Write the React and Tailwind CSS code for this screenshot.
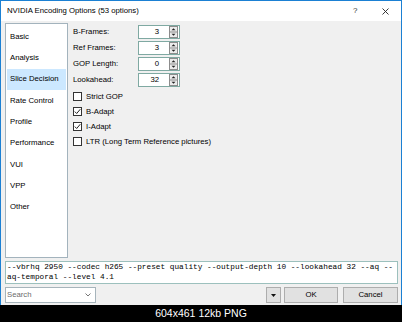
export default function App() {
  const items = ["Basic", "Analysis", "Slice Decision", "Rate Control", "Profile", "Performance", "VUI", "VPP", "Other"];
  const spins = [
    ["B-Frames:", "3"],
    ["Ref Frames:", "3"],
    ["GOP Length:", "0"],
    ["Lookahead:", "32"],
  ];
  const checks = [
    ["Strict GOP", false],
    ["B-Adapt", true],
    ["I-Adapt", true],
    ["LTR (Long Term Reference pictures)", false],
  ];
  return (
    <div className="w-[402px] h-[322px] bg-black flex flex-col font-['Liberation_Sans',Arial,sans-serif] text-[7.75px] text-black overflow-hidden">
      <div className="h-[305px] shrink-0 flex flex-col bg-[#f0f0f0] border-x border-t border-[#1b80d3]">
        {/* title bar */}
        <div className="h-[20px] shrink-0 bg-white flex items-center pl-[6px]">
          <span className="flex-1 text-black">NVIDIA Encoding Options (53 options)</span>
          <span className="w-[10px] text-[#333] text-[8px] mr-[19px]">?</span>
          <svg width="7" height="7" viewBox="0 0 7 7" className="mr-[12px]">
            <path d="M0.5 0.5 L6.5 6.5 M6.5 0.5 L0.5 6.5" stroke="#222" strokeWidth="0.9" />
          </svg>
        </div>
        {/* body */}
        <div className="flex-1 flex flex-col pl-[4px] pr-[3px] pt-[2px]">
          <div className="flex h-[235px] shrink-0">
            {/* nav list */}
            <div className="w-[63px] h-full bg-white border border-[#a3b3bd] pt-[2px] px-[1px]">
              {items.map((it) => (
                <div
                  key={it}
                  className={
                    "h-[21.3px] flex items-center pl-[3px] whitespace-nowrap " +
                    (it === "Slice Decision" ? "bg-[#cce8ff]" : "")
                  }
                >
                  {it}
                </div>
              ))}
            </div>
            {/* right panel */}
            <div className="flex-1 pl-[5px] pt-[2px] flex flex-col">
              <div className="flex flex-col gap-[2px]">
                {spins.map(([l, v]) => (
                  <div key={l} className="flex items-center h-[14px]">
                    <span className="w-[65px] whitespace-nowrap">{l}</span>
                    <div className="w-[42px] h-[14px] bg-white border border-[#7fa9a2] flex items-center">
                      <span className="flex-1 text-right pr-[10px]">{v}</span>
                      <svg width="9" height="12" viewBox="0 0 9 12" className="mr-[1px]">
                        <rect x="0.5" y="0.5" width="8" height="11" fill="#ececec" stroke="#8c8c8c" />
                        <line x1="0" y1="6" x2="9" y2="6" stroke="#8c8c8c" />
                        <path d="M2.5 4.2 L4.5 2.2 L6.5 4.2Z" fill="#222" />
                        <path d="M2.5 7.8 L4.5 9.8 L6.5 7.8Z" fill="#222" />
                      </svg>
                    </div>
                  </div>
                ))}
              </div>
              <div className="flex flex-col mt-[2px]">
                {checks.map(([l, c]) => (
                  <div key={l} className="h-[15px] flex items-center">
                    <div className="w-[9px] h-[9px] bg-white border border-[#333] flex items-center justify-center">
                      {c && (
                        <svg width="7" height="7" viewBox="0 0 7 7">
                          <path d="M0.8 3.6 L2.7 5.5 L6.3 1.2" stroke="#222" strokeWidth="1" fill="none" />
                        </svg>
                      )}
                    </div>
                    <span className="ml-[4px] whitespace-nowrap">{l}</span>
                  </div>
                ))}
              </div>
            </div>
          </div>
          {/* command line box */}
          <div className="mt-[3px] h-[23px] shrink-0 bg-white border border-[#9cc0bd] px-[1px] font-['Liberation_Mono',monospace] text-[7.75px] leading-[10px] text-black">
            <div className="whitespace-pre">--vbrhq 2950 --codec h265 --preset quality --output-depth 10 --lookahead 32 --aq --</div>
            <div className="whitespace-pre">aq-temporal --level 4.1</div>
          </div>
          {/* bottom row */}
          <div className="mt-[3px] h-[16px] shrink-0 flex items-center">
            <div className="w-[91px] h-[16px] bg-white border border-[#a6b4bb] flex items-center pl-[1px]">
              <span className="flex-1 text-[#6d6d6d]">Search</span>
              <svg width="6" height="4" viewBox="0 0 6 4" className="mr-[4px]">
                <path d="M0.5 0.5 L3 3 L5.5 0.5" stroke="#666" strokeWidth="0.9" fill="none" />
              </svg>
            </div>
            <div className="flex-1" />
            <div className="w-[15px] h-[16px] bg-[#e1e1e1] border border-[#adadad] flex items-center justify-center">
              <svg width="5" height="3" viewBox="0 0 5 3">
                <path d="M0 0 L5 0 L2.5 3Z" fill="#111" />
              </svg>
            </div>
            <div className="ml-[3px] w-[54px] h-[16px] bg-[#e1e1e1] border border-[#adadad] flex items-center justify-center">
              OK
            </div>
            <div className="ml-[5px] w-[55px] h-[16px] bg-[#e1e1e1] border border-[#adadad] flex items-center justify-center">
              Cancel
            </div>
          </div>
        </div>
      </div>
      <div className="flex-1 flex items-center justify-center text-white text-[10.5px]">
        604x461 12kb PNG
      </div>
    </div>
  );
}
